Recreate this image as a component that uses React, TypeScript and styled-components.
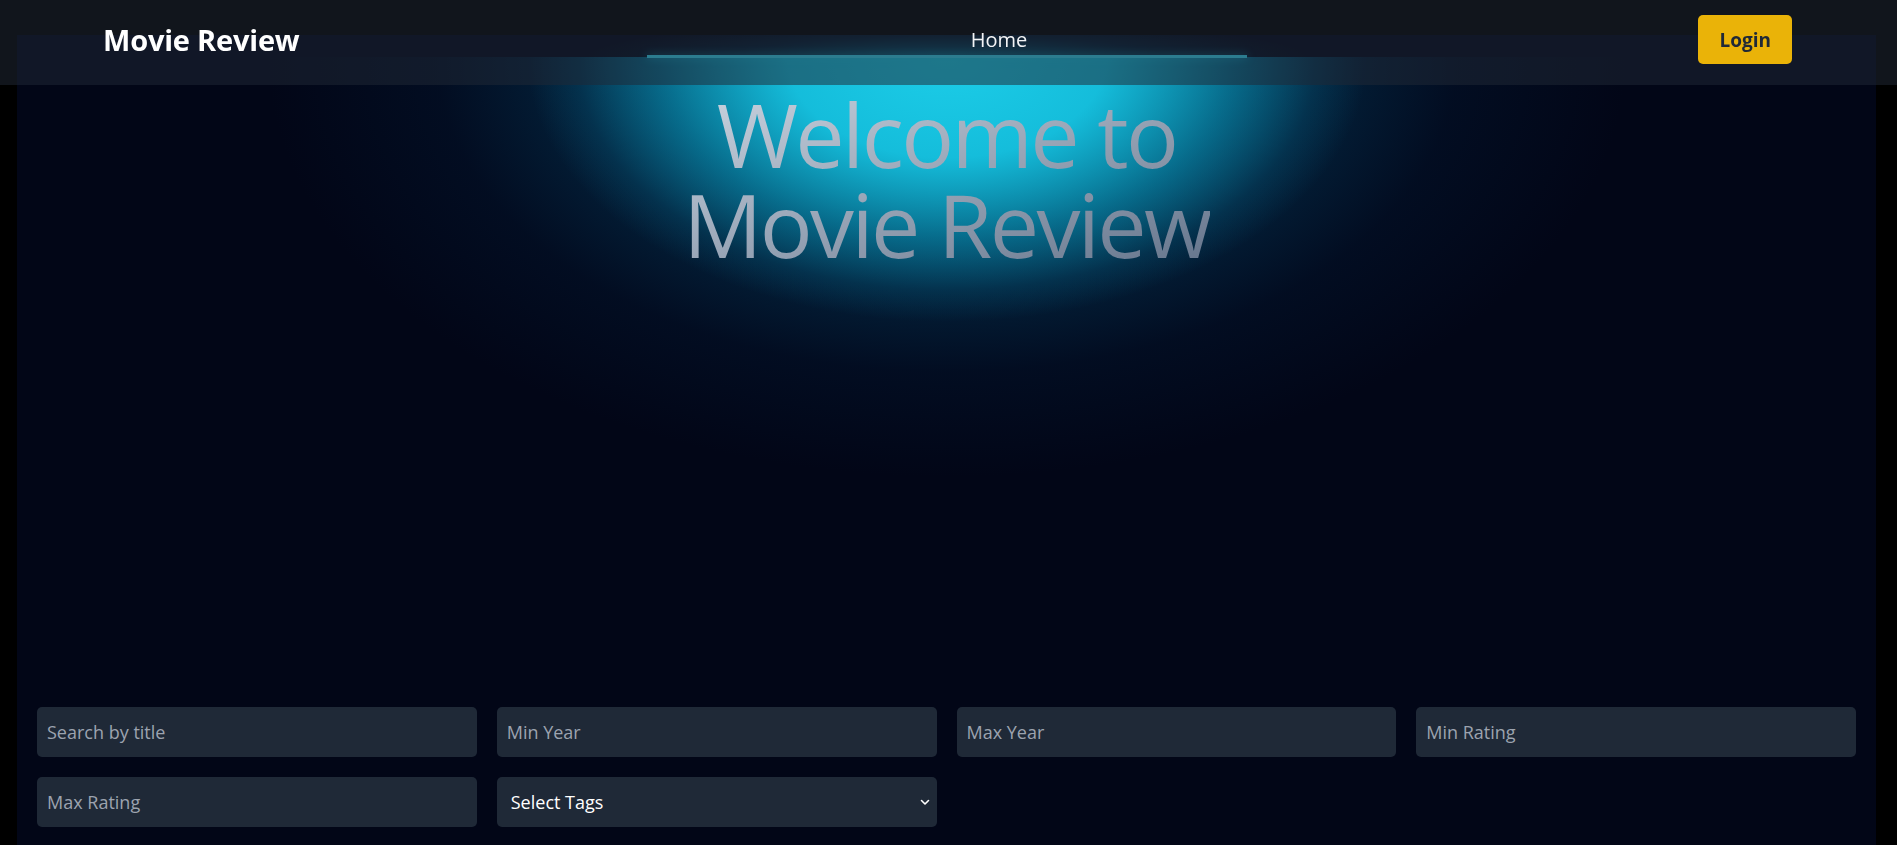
import React from "react";
import styled, { createGlobalStyle } from "styled-components";

const GlobalStyle = createGlobalStyle`
  html, body {
    margin: 0;
    padding: 0;
    background: #000000;
  }
  body {
    font-family: "Open Sans", "Noto Sans", "Liberation Sans", sans-serif;
    color: #ffffff;
  }
  * {
    box-sizing: border-box;
  }
`;

const Page = styled.div`
  min-height: 100vh;
  padding: 35px 21px 0 17px;
`;

const Main = styled.main`
  background: #020617;
  min-height: calc(100vh - 35px);
`;

const Header = styled.header`
  position: fixed;
  top: 0;
  left: 0;
  right: 0;
  z-index: 50;
  height: 85px;
  background: rgba(33, 40, 54, 0.52);
  display: flex;
  align-items: center;
  justify-content: space-between;
  padding: 0 105px 6px 103px;
`;

const Logo = styled.div`
  font-size: 29px;
  font-weight: 700;
  letter-spacing: -0.2px;
  line-height: 38px;
  color: #ffffff;
`;

const NavLink = styled.a`
  font-size: 20px;
  line-height: 27px;
  color: #f3f4f6;
  text-decoration: none;
  cursor: pointer;
`;

const LoginButton = styled.button`
  height: 49px;
  padding: 0 21px;
  border: none;
  border-radius: 5px;
  background: #eab308;
  color: #1f2937;
  font-family: inherit;
  font-size: 19px;
  font-weight: 700;
  cursor: pointer;
`;

const Hero = styled.section`
  position: relative;
  height: 652px;
  overflow: hidden;
  isolation: isolate;
  display: flex;
  flex-direction: column;
  align-items: center;
  padding-top: 54px;
`;

const LampHalo = styled.div`
  position: absolute;
  top: 0;
  left: 50%;
  width: 760px;
  height: 22px;
  transform: translateX(-50%);
  background: radial-gradient(
    ellipse 360px 36px at 50% 100%,
    rgba(6, 110, 140, 0.7) 0%,
    rgba(6, 70, 100, 0.3) 60%,
    transparent 100%
  );
  z-index: -1;
`;

const LampGlow = styled.div`
  position: absolute;
  top: 22px;
  left: 50%;
  width: 1600px;
  height: 560px;
  transform: translateX(-50%);
  background:
    radial-gradient(
      ellipse 420px 265px at 50% 0%,
      rgba(28, 205, 232, 1) 0%,
      rgba(22, 198, 228, 0.93) 38%,
      rgba(10, 160, 195, 0.55) 68%,
      rgba(8, 130, 170, 0.18) 88%,
      rgba(8, 130, 170, 0) 100%
    ),
    radial-gradient(
      ellipse 680px 420px at 50% 0%,
      rgba(8, 130, 165, 0.75) 0%,
      rgba(5, 85, 125, 0.45) 45%,
      rgba(3, 40, 75, 0.2) 75%,
      transparent 100%
    );
  z-index: -1;
`;

const LampLine = styled.div`
  position: absolute;
  top: 20px;
  left: 50%;
  width: 600px;
  height: 3px;
  transform: translateX(-50%);
  background: #3ad7f0;
  box-shadow: 0 0 8px rgba(34, 211, 238, 0.6);
`;

const Title = styled.h1`
  margin: 0;
  font-size: 88px;
  line-height: 90px;
  font-weight: 500;
  letter-spacing: -0.03em;
  text-align: center;
  background: linear-gradient(to bottom right, #cbd5e1, #64748b);
  -webkit-background-clip: text;
  background-clip: text;
  color: transparent;
`;

const Filters = styled.section`
  display: grid;
  grid-template-columns: repeat(4, 1fr);
  gap: 20px;
  padding: 20px;
`;

const fieldBase = `
  width: 100%;
  height: 50px;
  border: none;
  border-radius: 5px;
  background: #1f2937;
  color: #ffffff;
  font-family: "Open Sans", "Noto Sans", "Liberation Sans", sans-serif;
  font-size: 18px;
  outline: none;
`;

const FilterInput = styled.input`
  ${fieldBase}
  padding: 0 10px;

  &::placeholder {
    color: #9ca3af;
  }
`;

const SelectWrap = styled.div`
  position: relative;
`;

const TagSelect = styled.select`
  ${fieldBase}
  padding: 0 30px 0 14px;
  appearance: none;
  -webkit-appearance: none;
`;

const Chevron = styled.svg`
  position: absolute;
  right: 6px;
  top: 50%;
  width: 12px;
  height: 12px;
  transform: translateY(-50%);
  pointer-events: none;
`;

const filterFields = ["Search by title", "Min Year", "Max Year", "Min Rating", "Max Rating"];

export default function App() {
  return (
    <>
      <GlobalStyle />
      <Header>
        <Logo>Movie Review</Logo>
        <NavLink>Home</NavLink>
        <LoginButton>Login</LoginButton>
      </Header>
      <Page>
        <Main>
          <Hero>
            <LampHalo />
            <LampGlow />
            <LampLine />
            <Title>
              Welcome to
              <br />
              Movie Review
            </Title>
          </Hero>
          <Filters>
            {filterFields.map((f) => (
              <FilterInput key={f} placeholder={f} />
            ))}
            <SelectWrap>
              <TagSelect defaultValue="">
                <option value="">Select Tags</option>
                <option value="action">Action</option>
                <option value="drama">Drama</option>
                <option value="comedy">Comedy</option>
              </TagSelect>
              <Chevron viewBox="0 0 12 12" fill="none">
                <path d="M2.5 4.5 L6 8 L9.5 4.5" stroke="#ffffff" strokeWidth="1.6" strokeLinecap="round" strokeLinejoin="round" />
              </Chevron>
            </SelectWrap>
          </Filters>
        </Main>
      </Page>
    </>
  );
}
